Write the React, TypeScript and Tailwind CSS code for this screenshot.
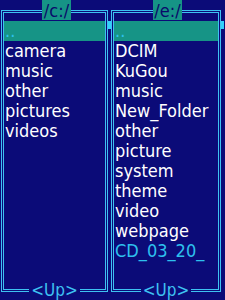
import React from 'react'

const leftItems = ['camera', 'music', 'other', 'pictures', 'videos']
const rightItems = ['DCIM', 'KuGou', 'music', 'New_Folder', 'other', 'picture', 'system', 'theme', 'video', 'webpage']

function Panel({ title, items, extra, titleLeft, boxWidth, marginLeft }: {
  title: string
  items: string[]
  extra?: string
  titleLeft: string
  boxWidth: string
  marginLeft: string
}) {
  return (
    <div className={`flex ${marginLeft}`}>
      <div className={`relative mt-[10px] h-[282px] ${boxWidth} border border-[#3ec2f2] p-px`}>
        <div className="h-full border border-[#3ec2f2] pt-[8px]">
          <div className="h-5 bg-[#169486] pl-[1px] leading-[20px] text-[#2ec0ee]">..</div>
          {items.map((it) => (
            <div key={it} className="h-5 pl-[1px] leading-[20px] text-white">{it}</div>
          ))}
          {extra && <div className="h-5 pl-[1px] leading-[20px] text-[#2ec0ee]">{extra}</div>}
        </div>
        <div className={`absolute ${titleLeft} top-[-11px] flex h-5 w-[29px] items-center justify-center bg-[#169486] text-[#0a0a6a]`}>
          {title}
        </div>
        <div className="absolute bottom-[-7px] left-0 right-0 flex justify-center">
          <div className="bg-[#0b0b78] px-[2px] text-[17px] leading-[16px] text-[#3ec2f2]">&lt;Up&gt;</div>
        </div>
      </div>
      <div className="mt-[21px] h-[8px] w-[3px] bg-[#34d0fa]" />
    </div>
  )
}

export default function App() {
  return (
    <div className="flex h-[300px] w-[225px] overflow-hidden bg-[#0b0b78] text-[18px] font-['DejaVu_Sans_Condensed','DejaVu_Sans',sans-serif] [font-stretch:condensed]">
      <Panel title="/c:/" items={leftItems} titleLeft="left-[40px]" boxWidth="w-[107px]" marginLeft="ml-px" />
      <Panel title="/e:/" items={rightItems} extra="CD_03_20_" titleLeft="left-[41px]" boxWidth="w-[110px]" marginLeft="" />
    </div>
  )
}
